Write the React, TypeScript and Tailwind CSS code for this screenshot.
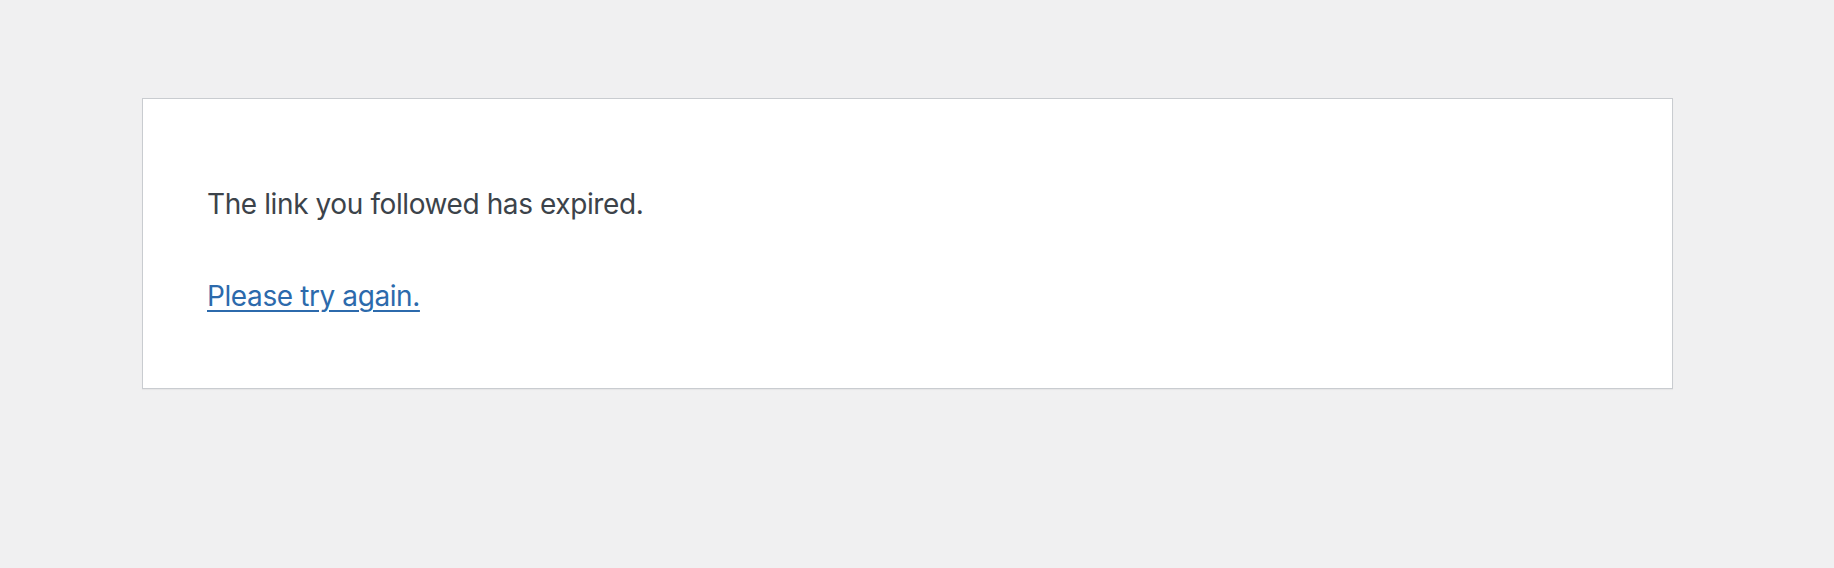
export default function App() {
  return (
    <div className="min-h-screen w-full bg-[#f0f0f1] pt-[98px]" style={{ fontFamily: 'Inter, "Noto Sans", sans-serif' }}>
      <div className="ml-[142px] w-[1531px] border border-[#c9ccd0] bg-white pl-[64px] pt-[84px] pb-[71px] shadow-[0_1px_1px_rgba(0,0,0,0.04)]">
        <p className="m-0 text-[28px] leading-[42px] tracking-[-0.4px] text-[#3c434a]">The link you followed has expired.</p>
        <p className="m-0 mt-[50px] text-[28px] leading-[42px] tracking-[-0.4px]">
          <a href="#" className="text-[#2c6aac] underline decoration-[2px] underline-offset-[4px]">Please try again.</a>
        </p>
      </div>
    </div>
  );
}
